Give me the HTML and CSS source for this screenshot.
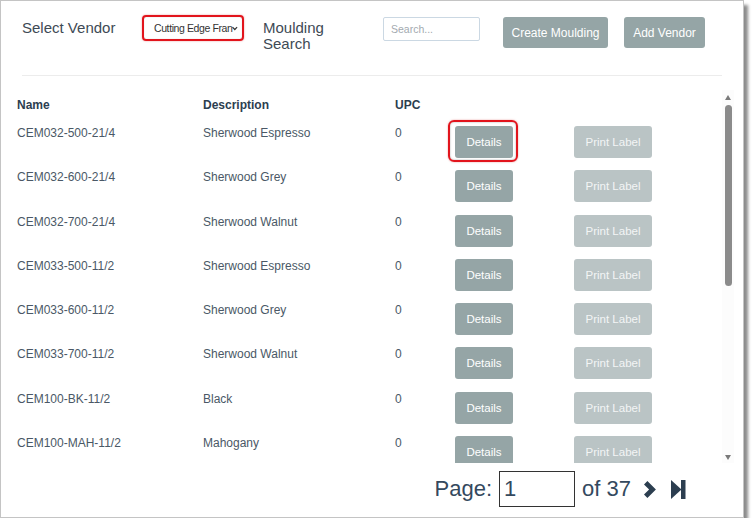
FILE: index.html
```html
<!DOCTYPE html>
<html lang="en">
<head>
  <meta charset="UTF-8" />
  <meta name="viewport" content="width=device-width, initial-scale=1.0"/>
  <title>Mouldings</title>
  <link rel="stylesheet" href="styles.css">
</head>
<body>

  <div class="window">
    <div class="toolbar">
      <div class="label vendor-label">Select Vendor</div>
      <div class="vendor-select">
        <span>Cutting Edge Fran</span>
        <svg width="7" height="5" viewBox="0 0 7 5"><path d="M0.6 0.8 L3.5 3.8 L6.4 0.8" fill="none" stroke="#333" stroke-width="1.5"/></svg>
      </div>
      <div class="label search-label">Moulding<br>Search</div>
      <input class="search" type="text" placeholder="Search..." />
      <button class="btn btn-create">Create Moulding</button>
      <button class="btn btn-vendor">Add Vendor</button>
    </div>

    <div class="rule"></div>

    <div class="list">
      <div class="table">
        <div class="row head">
          <div>Name</div>
          <div>Description</div>
          <div>UPC</div>
          <div></div>
          <div></div>
        </div>

        <div class="row">
          <div>CEM032-500-21/4</div>
          <div>Sherwood Espresso</div>
          <div>0</div>
          <div><span class="marked"><button class="btn btn-details">Details</button></span></div>
          <div><button class="btn btn-print" disabled>Print Label</button></div>
        </div>
        <div class="row">
          <div>CEM032-600-21/4</div>
          <div>Sherwood Grey</div>
          <div>0</div>
          <div><button class="btn btn-details">Details</button></div>
          <div><button class="btn btn-print" disabled>Print Label</button></div>
        </div>
        <div class="row">
          <div>CEM032-700-21/4</div>
          <div>Sherwood Walnut</div>
          <div>0</div>
          <div><button class="btn btn-details">Details</button></div>
          <div><button class="btn btn-print" disabled>Print Label</button></div>
        </div>
        <div class="row">
          <div>CEM033-500-11/2</div>
          <div>Sherwood Espresso</div>
          <div>0</div>
          <div><button class="btn btn-details">Details</button></div>
          <div><button class="btn btn-print" disabled>Print Label</button></div>
        </div>
        <div class="row">
          <div>CEM033-600-11/2</div>
          <div>Sherwood Grey</div>
          <div>0</div>
          <div><button class="btn btn-details">Details</button></div>
          <div><button class="btn btn-print" disabled>Print Label</button></div>
        </div>
        <div class="row">
          <div>CEM033-700-11/2</div>
          <div>Sherwood Walnut</div>
          <div>0</div>
          <div><button class="btn btn-details">Details</button></div>
          <div><button class="btn btn-print" disabled>Print Label</button></div>
        </div>
        <div class="row">
          <div>CEM100-BK-11/2</div>
          <div>Black</div>
          <div>0</div>
          <div><button class="btn btn-details">Details</button></div>
          <div><button class="btn btn-print" disabled>Print Label</button></div>
        </div>
        <div class="row">
          <div>CEM100-MAH-11/2</div>
          <div>Mahogany</div>
          <div>0</div>
          <div><button class="btn btn-details">Details</button></div>
          <div><button class="btn btn-print" disabled>Print Label</button></div>
        </div>
      </div>

      <div class="scrollbar">
        <div class="arrow-up"></div>
        <div class="thumb"></div>
        <div class="arrow-down"></div>
      </div>
    </div>

    <div class="pager">
      <span class="page-text">Page:</span>
      <input class="page-input" type="text" value="1" />
      <span class="page-text">of 37</span>
      <svg class="page-next" width="15" height="17" viewBox="0 0 15 17"><polygon points="1,3.4 4.4,0 12.9,8.5 4.4,17 1,13.6 6.1,8.5" fill="#2c3e50"/></svg>
      <svg class="page-last" width="15" height="19" viewBox="0 0 15 19"><polygon points="0,0 10.5,9.5 0,19" fill="#2c3e50"/><rect x="10" y="0" width="4.5" height="19" fill="#2c3e50"/></svg>
    </div>
  </div>

</body>
</html>
```

FILE: styles.css
```css
body {
  font-family: "Liberation Sans", Arial, sans-serif;
  background: white;
  margin: 0;
}

.window {
  width: 742px;
  height: 516px;
  border: 1px solid #c4c4c4;
  background: white;
  box-shadow: 4px 5px 3px rgba(0,0,0,0.45);
}

.toolbar {
  display: flex;
  align-items: flex-start;
  height: 74px;
  padding: 16px 0 0 21px;
  box-sizing: border-box;
}

.label {
  font-size: 15px;
  line-height: 16px;
  color: #3e4a55;
  margin-top: 3px;
}

.vendor-label {
  width: 120px;
}

.vendor-select {
  display: flex;
  align-items: center;
  width: 102px;
  height: 26px;
  margin-top: -2px;
  margin-right: 19px;
  padding: 0 4px 0 10px;
  box-sizing: border-box;
  border: 2px solid #e2141c;
  border-radius: 4px;
  box-shadow: 0 0 2px rgba(200,0,0,0.4), inset 0 0 1px rgba(0,0,0,0.3);
  font-size: 10.5px;
  letter-spacing: -0.4px;
  color: #333;
}

.vendor-select span {
  width: 80px;
  white-space: nowrap;
}

.search-label {
  width: 120px;
}

.search {
  width: 97px;
  height: 24px;
  padding: 0 7px;
  box-sizing: border-box;
  border: 1px solid #cbd8e3;
  border-radius: 2px;
  font-family: inherit;
  font-size: 10.5px;
  outline: none;
}

.search::placeholder {
  color: #a3aab0;
}

.btn {
  border: none;
  border-radius: 3px;
  background: #95a5a6;
  color: white;
  font-family: inherit;
  padding: 0;
}

.btn-create {
  width: 105px;
  height: 31px;
  margin-left: 23px;
  font-size: 12px;
}

.btn-vendor {
  width: 81px;
  height: 31px;
  margin-left: 16px;
  font-size: 12px;
}

.rule {
  width: 700px;
  margin-left: 21px;
  border-top: 1px solid #ececec;
}

.list {
  display: flex;
  height: 373px;
  margin: 14px 9px 0 0;
}

.table {
  flex: 1;
  overflow: hidden;
  padding-top: 8px;
}

.row {
  display: grid;
  grid-template-columns: 186px 192px 60px 119px 78px;
  padding-left: 16px;
  height: 44.3px;
  font-size: 12px;
  line-height: 14px;
  color: #4a5866;
}

.row.head {
  height: 28px;
  font-weight: bold;
  color: #2c3e50;
}

.btn-details {
  width: 58px;
  height: 32px;
  font-size: 11.5px;
}

.btn-print {
  width: 78px;
  height: 32px;
  font-size: 11.5px;
  background: #bac4c5;
  color: #f3f5f5;
}

.marked {
  position: relative;
  display: inline-block;
}

.marked::after {
  content: "";
  position: absolute;
  top: -6px;
  left: -7px;
  right: -5px;
  bottom: -4px;
  border: 2.5px solid #e2141c;
  border-radius: 6px;
  box-shadow: inset 0 0 2px rgba(0,0,0,0.35), 0 0 2px rgba(200,0,0,0.4);
}

.scrollbar {
  width: 12px;
  display: flex;
  flex-direction: column;
  align-items: center;
  padding: 5px 0 3px;
  box-sizing: border-box;
  background: #fcfcfc;
}

.arrow-up {
  width: 0;
  height: 0;
  border-left: 3.5px solid transparent;
  border-right: 3.5px solid transparent;
  border-bottom: 5px solid #7a7a7a;
}

.thumb {
  width: 7px;
  height: 181px;
  margin-top: 5px;
  border-radius: 4px;
  background: #8b8b8b;
}

.arrow-down {
  width: 0;
  height: 0;
  margin-top: auto;
  border-left: 3.5px solid transparent;
  border-right: 3.5px solid transparent;
  border-top: 5px solid #7a7a7a;
}

.pager {
  display: flex;
  align-items: center;
  justify-content: flex-end;
  margin-top: 8px;
  padding-right: 57px;
  color: #34495e;
}

.page-text {
  font-size: 22px;
}

.page-input {
  width: 76px;
  height: 36px;
  margin: 0 7px;
  padding: 0 4px;
  box-sizing: border-box;
  border: 1px solid #333;
  font-family: inherit;
  font-size: 22px;
  color: #34495e;
  outline: none;
}

.page-next {
  margin-left: 12px;
}

.page-last {
  margin-left: 13px;
}
```
